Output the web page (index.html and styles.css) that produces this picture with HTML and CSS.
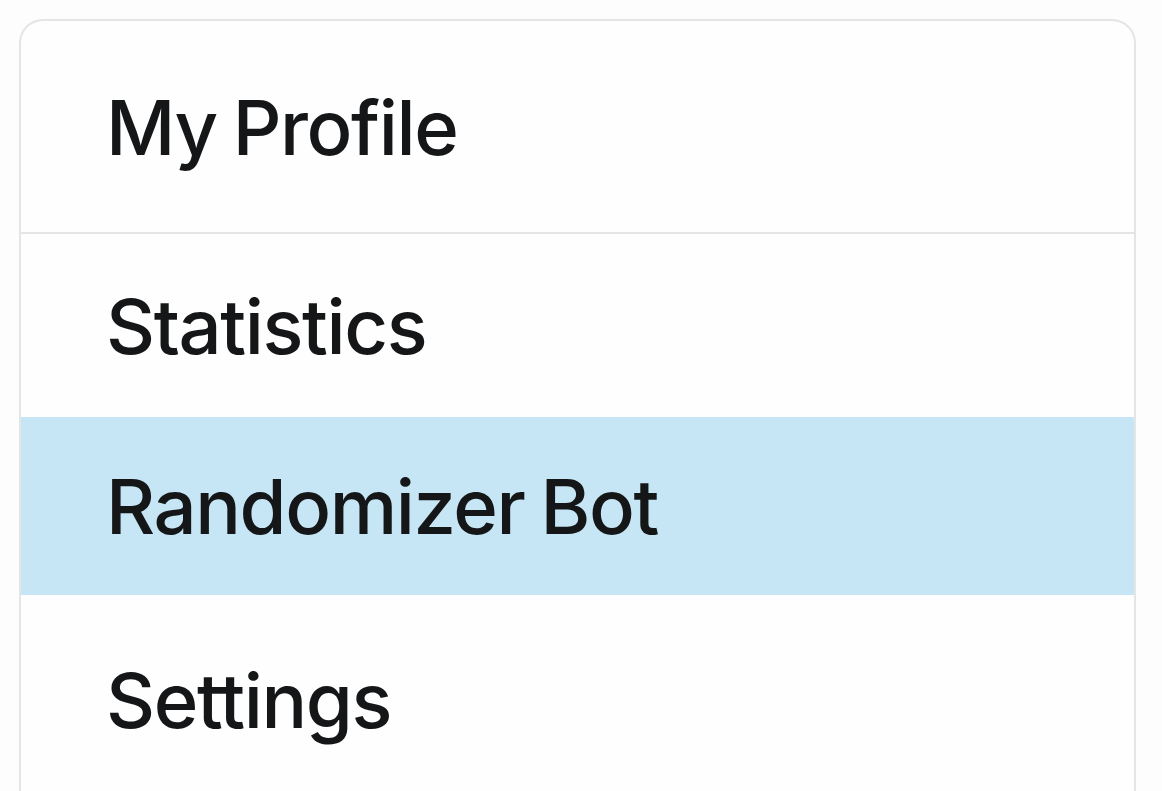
FILE: index.html
```html
<!DOCTYPE html>
<html lang="en">
<head>
<meta charset="utf-8">
<title>Menu</title>
<link rel="stylesheet" href="styles.css">
</head>
<body>
<nav class="menu">
  <div class="item item-first">My Profile</div>
  <div class="item item-stats">Statistics</div>
  <div class="item item-active">Randomizer Bot</div>
  <div class="item item-last">Settings</div>
</nav>
</body>
</html>
```
FILE: styles.css
```css
html, body {
  margin: 0;
  padding: 0;
  background: #fdfdfd;
  height: 100%;
  overflow: hidden;
}
body {
  padding: 19px 0 0 19px;
  box-sizing: border-box;
  font-family: Inter, "Liberation Sans", sans-serif;
  color: #151617;
}
.menu {
  width: 1117px;
  box-sizing: border-box;
  border: 2px solid #e3e5e7;
  border-bottom: none;
  border-radius: 24px 24px 0 0;
  background: #fefefe;
  display: flex;
  flex-direction: column;
  overflow: hidden;
}
.item {
  display: flex;
  align-items: center;
  padding-left: 85px;
  font-size: 76px;
  font-weight: 500;
  line-height: 1;
  letter-spacing: -1.4px;
  word-spacing: -3px;
}
.item-first {
  height: 211px;
  border-bottom: 2px solid #e3e5e7;
}
.item-stats {
  height: 183px;
}
.item-active {
  height: 178px;
  background: #c6e6f5;
}
.item-last {
  height: 210px;
}
```
